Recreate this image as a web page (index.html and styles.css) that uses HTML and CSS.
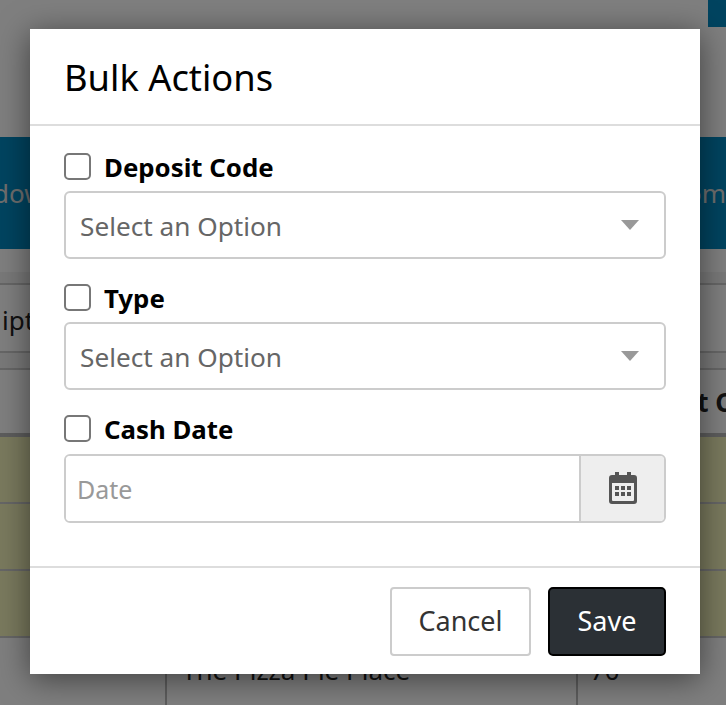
FILE: index.html
```html
<html>
    <head>
        <title>Bulk Actions</title>
        <link rel="stylesheet" href="styles.css">
    </head>
    <body>
        <!-- page behind the dialog -->
        <div class="page">
            <div class="topbar"><span class="topbar-btn"></span></div>
            <div class="banner"><span class="banner-left">dow</span><span>om</span></div>
            <div class="search-strip"></div>
            <div class="search-row">ipt</div>
            <div class="thin-strip"></div>
            <div class="table-head"><span class="head-text">t C</span></div>
            <div class="row-olive"></div>
            <div class="row-olive"></div>
            <div class="row-olive"></div>
            <div class="row-plain">
                <span class="cell-a"></span>
                <span class="cell-b">The Pizza Pie Place</span>
                <span class="cell-c">70</span>
            </div>
        </div>
        <div class="overlay"></div>

        <div class="modal">
            <div class="modal-header">
                <h1>Bulk Actions</h1>
            </div>
            <div class="modal-body">
                <label class="check-label"><input type="checkbox" class="check"> Deposit Code</label>
                <div class="select">
                    <span class="select-text">Select an Option</span>
                    <span class="caret"></span>
                </div>
                <label class="check-label"><input type="checkbox" class="check"> Type</label>
                <div class="select">
                    <span class="select-text">Select an Option</span>
                    <span class="caret"></span>
                </div>
                <label class="check-label"><input type="checkbox" class="check"> Cash Date</label>
                <div class="date-group">
                    <input type="text" class="date-input" placeholder="Date">
                    <span class="date-addon">
                        <svg class="date-icon" width="28" height="32" viewBox="0 0 28 32">
                            <path fill="#555" fill-rule="evenodd" d="M6 0h4v3h8V0h4v3h3a3 3 0 0 1 3 3v23a3 3 0 0 1-3 3H3a3 3 0 0 1-3-3V6a3 3 0 0 1 3-3h3zM3 11v17a1 1 0 0 0 1 1h20a1 1 0 0 0 1-1V11z"/>
                            <path fill="#555" d="M6 14h4v4H6zM12 14h4v4h-4zM18 14h4v4h-4zM6 20h4v4H6zM12 20h4v4h-4zM18 20h4v4h-4z"/>
                        </svg>
                    </span>
                </div>
            </div>
            <div class="modal-footer">
                <button class="btn btn-cancel">Cancel</button>
                <button class="btn btn-save">Save</button>
            </div>
        </div>
    </body>
</html>
```

FILE: styles.css
```css
html, body{
    margin: 0;
    height: 705px;
    overflow: hidden;
}
body{
    font-family: "Noto Sans", sans-serif;
    background-color: white;
    position: relative;
}
.page{
    height: 705px;
    overflow: hidden;
    color: #222;
    font-size: 26px;
}
.topbar{
    height: 27px;
    display: flex;
    justify-content: flex-end;
}
.topbar-btn{
    width: 18px;
    background-color: #0089c0;
}
.banner{
    margin-top: 110px;
    height: 112px;
    background-color: #0089c0;
    color: #ddd;
    display: flex;
    justify-content: space-between;
    align-items: center;
}
.banner-left{
    margin-left: -7px;
}
.search-strip{
    margin-top: 23px;
    height: 11px;
    background-color: #f2f2f2;
    border-bottom: 2px solid #ccc;
}
.search-row{
    height: 66px;
    line-height: 70px;
    padding-left: 2px;
    border-bottom: 2px solid #ccc;
}
.thin-strip{
    height: 15px;
    background-color: #f2f2f2;
    border-bottom: 2px solid #ccc;
}
.table-head{
    height: 63px;
    display: flex;
    justify-content: flex-end;
    align-items: center;
    font-weight: bold;
    border-bottom: 4px solid #bbb;
}
.head-text{
    margin-right: -6px;
}
.row-olive{
    height: 65px;
    background-color: #f4f4bc;
    border-bottom: 2px solid #ccc;
}
.row-plain{
    height: 68px;
    display: flex;
}
.cell-a{
    width: 165px;
    border-right: 2px solid #bbb;
}
.cell-b{
    width: 394px;
    padding-left: 15px;
    border-right: 2px solid #bbb;
    line-height: 64px;
}
.cell-c{
    padding-left: 12px;
    line-height: 64px;
}
.overlay{
    position: absolute;
    top: 0;
    left: 0;
    right: 0;
    bottom: 0;
    background-color: rgba(0,0,0,.5);
}
.modal{
    position: absolute;
    top: 29px;
    left: 30px;
    width: 670px;
    height: 645px;
    background-color: white;
    box-shadow: 0 5px 30px rgba(0,0,0,.5);
    display: flex;
    flex-direction: column;
}
.modal-header{
    height: 95px;
    border-bottom: 2px solid #ddd;
    padding: 0 34px;
    display: flex;
    align-items: center;
}
h1{
    margin: 0;
    font-size: 36.3px;
    font-weight: normal;
    color: #000;
}
.modal-body{
    flex: 1;
    padding: 27px 34px 0;
}
.check-label{
    display: flex;
    align-items: center;
    gap: 13px;
    height: 28px;
    font-size: 25.8px;
    font-weight: bold;
    color: #000;
}
.check{
    appearance: none;
    flex: none;
    align-self: flex-start;
    margin: 0;
    width: 27px;
    height: 27px;
    border: 2px solid #777;
    border-radius: 5px;
    background: white;
}
.select{
    height: 64px;
    margin: 10px 0 25px;
    border: 2px solid #ccc;
    border-radius: 6px;
    padding: 0 25px 0 14px;
    display: flex;
    justify-content: space-between;
    align-items: center;
    font-size: 26.2px;
    color: #666;
}
.select-text{
    padding-top: 2px;
}
.caret{
    width: 0;
    height: 0;
    border-left: 9px solid transparent;
    border-right: 9px solid transparent;
    border-top: 10px solid #999;
}
.date-group{
    height: 65px;
    margin-top: 11px;
    border: 2px solid #ccc;
    border-radius: 6px;
    display: flex;
    overflow: hidden;
}
.date-input{
    flex: 1;
    min-width: 0;
    border: 0;
    outline: 0;
    padding: 0 11px;
    font-family: inherit;
    font-size: 25px;
}
.date-input::placeholder{
    color: #999;
}
.date-addon{
    width: 83px;
    border-left: 2px solid #ccc;
    background-color: #eee;
    display: flex;
    align-items: center;
    justify-content: center;
}
.date-icon{
    margin-bottom: 1px;
}
.modal-footer{
    height: 108px;
    box-sizing: border-box;
    border-top: 2px solid #ddd;
    padding: 19px 34px 0;
    display: flex;
    justify-content: flex-end;
    gap: 17px;
}
.btn{
    height: 69px;
    font-family: inherit;
    font-size: 27px;
    border-radius: 4px;
    background: white;
    color: #333;
    border: 2px solid #ccc;
    padding: 0 0 2px;
}
.btn-cancel{
    width: 141px;
}
.btn-save{
    width: 118px;
    background-color: #2b3035;
    border-color: black;
    border-radius: 5px;
    color: white;
}
```
